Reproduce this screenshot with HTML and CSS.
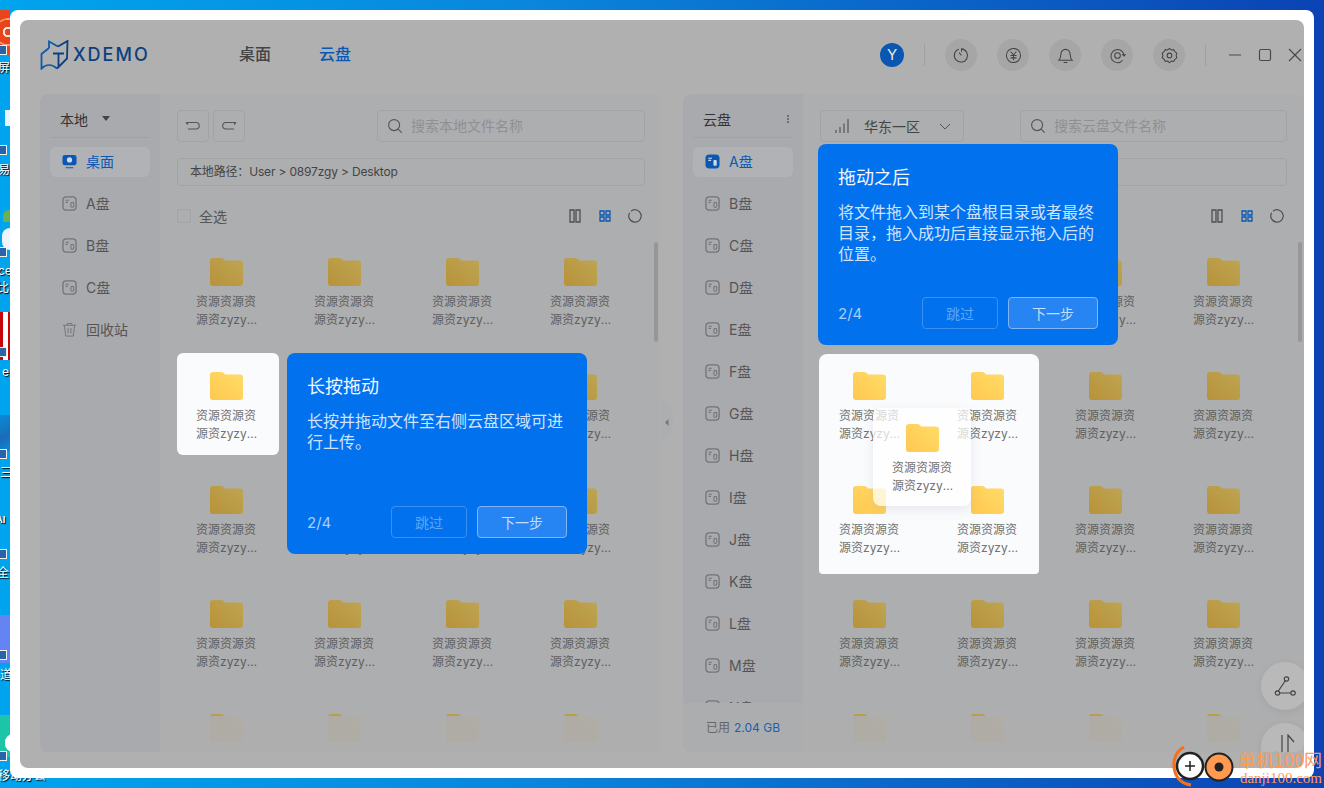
FILE: index.html
```html
<!DOCTYPE html>
<html lang="en">
<head>
  <meta charset="UTF-8" />
  <title>XDEMO</title>
  <link rel="stylesheet" href="styles.css">
</head>
<body>

  <!-- Shared icons -->
  <svg class="defs" width="0" height="0">
    <defs>
      <linearGradient id="dimFill" x1="0" y1="1" x2="1" y2="0">
        <stop offset="0" stop-color="#b8923a"/>
        <stop offset="1" stop-color="#bea553"/>
      </linearGradient>
      <linearGradient id="litFill" x1="0" y1="1" x2="1" y2="0">
        <stop offset="0" stop-color="#ffc850"/>
        <stop offset="1" stop-color="#ffdc68"/>
      </linearGradient>
      <symbol id="folder" viewBox="0 0 33 28">
        <path d="M3 0h8c2 0 3 1 4 2.500h15a3 3 0 0 1 3 3V25a3 3 0 0 1-3 3H3a3 3 0 0 1-3-3V3a3 3 0 0 1 3-3z"/>
      </symbol>
      <symbol id="disk" viewBox="0 0 16 16">
        <rect x="1" y="1" width="14" height="14" rx="3.500" fill="none" stroke="currentColor" stroke-width="1.400"/>
        <path d="M3.800 4.500h3.500M3.800 6.800h2.500" fill="none" stroke="currentColor" stroke-width="1.100"/>
        <rect x="9.500" y="7" width="3" height="5" rx="1" fill="none" stroke="currentColor" stroke-width="1.100"/>
      </symbol>
      <symbol id="search" viewBox="0 0 18 18">
        <circle cx="8" cy="8" r="6.200" fill="none" stroke="currentColor" stroke-width="1.300"/>
        <path d="M12.500 12.500l4 4" fill="none" stroke="currentColor" stroke-width="1.300"/>
      </symbol>
      <symbol id="pillars" viewBox="0 0 14 14">
        <path d="M2 1h4v12H2zM8 1h4v12H8z" fill="none" stroke="currentColor" stroke-width="1.300"/>
      </symbol>
      <symbol id="cells" viewBox="0 0 14 14">
        <path d="M2 2h4v4H2zM8 2h4v4H8zM2 8h4v4H2zM8 8h4v4H8z" fill="none" stroke="currentColor" stroke-width="1.300"/>
      </symbol>
      <symbol id="ring" viewBox="0 0 14 14">
        <path d="M3 2.200A6.200 6.200 0 1 1 1.700 3.700" fill="none" stroke="currentColor" stroke-width="1.200"/>
      </symbol>
    </defs>
  </svg>

  <!-- Desktop behind the window -->
  <div class="desk-item tile-red"></div>
  <div class="desk-item tile-sky"></div>
  <div class="desk-item tile-leaf"></div>
  <div class="desk-item tile-ball"></div>
  <div class="desk-item tile-crimson"></div>
  <div class="desk-item tile-wave"></div>
  <div class="desk-item tile-violet"></div>
  <div class="desk-item tile-teal"></div>
  <div class="desk-badge badge-1"></div>
  <div class="desk-badge badge-2"></div>
  <div class="desk-badge badge-3"></div>
  <div class="desk-badge badge-4"></div>
  <div class="desk-badge badge-5"></div>
  <div class="desk-badge badge-6"></div>
  <div class="desk-badge badge-7"></div>
  <div class="desk-badge badge-8"></div>
  <span class="desk-label label-1">屏幕</span>
  <span class="desk-label label-2">易</span>
  <span class="desk-label label-3">ce</span>
  <span class="desk-label label-4">比</span>
  <span class="desk-label label-5">e</span>
  <span class="desk-label label-6">三</span>
  <span class="desk-label label-7">AI</span>
  <span class="desk-label label-8">全</span>
  <span class="desk-label label-9">道</span>
  <span class="desk-label label-10">移动办公</span>

  <div class="window">
    <div class="app">

      <header class="topbar">
        <div class="logo">
          <svg class="logo-mark" viewBox="0 0 30 30">
            <path class="logo-left" d="M9 8V1.500L18 6.500M9 8L1.500 14v14.500C6 24 12 24 17 28.500"/>
            <path d="M18 6.500L27.500 1l-.5 17.500-10 10M13 13.500h11M18.500 13.500V27"/>
          </svg>
          <span class="logo-text">XDEMO</span>
        </div>
        <nav class="tabs">
          <span class="tab">桌面</span>
          <span class="tab active">云盘</span>
        </nav>
        <div class="tools">
          <span class="avatar">Y</span>
          <i class="vline"></i>
          <button class="round"><svg viewBox="0 0 18 18"><path d="M6 2.400A7 7 0 1 0 9 2V5M9 9L6.500 6"/></svg></button>
          <button class="round"><svg viewBox="0 0 18 18"><circle cx="9" cy="9" r="7.500"/><path d="M6 4.800L9 8.500l3-3.700M5.800 9h6.400M5.800 11.500h6.400M9 8.500v5.500"/></svg></button>
          <button class="round"><svg viewBox="0 0 18 18"><path d="M2 14h14c-1.500-1.500-2-3-2-5.500 0-3.500-2-6-5-6s-5 2.500-5 6C4 11 3.500 12.500 2 14zM7 16.500h4"/></svg></button>
          <button class="round"><svg viewBox="0 0 18 18"><circle cx="9" cy="9" r="3"/><path d="M14.500 14A7 7 0 1 1 16 9M14 7.500l2 2 1.500-2"/></svg></button>
          <button class="round"><svg viewBox="0 0 18 18"><circle cx="9" cy="9" r="2.500"/><path d="M9 1.500l2 1.600 2.500-.3 1.200 2.200 2 1.500-.7 2.500.7 2.500-2 1.500-1.200 2.200-2.500-.3-2 1.600-2-1.600-2.500.3-1.200-2.200-2-1.500.7-2.500-.7-2.500 2-1.500 1.200-2.200 2.500.3z"/></svg></button>
          <i class="vline"></i>
          <div class="winctl">
            <svg viewBox="0 0 14 14"><path d="M1 7h12"/></svg>
            <svg viewBox="0 0 14 14"><rect x="1.500" y="1.500" width="11" height="11" rx="1.500"/></svg>
            <svg viewBox="0 0 14 14"><path d="M1 1l12 12M13 1L1 13"/></svg>
          </div>
        </div>
      </header>

      <div class="panels">

        <!-- Local files -->
        <section class="panel panel-local">
          <aside class="side">
            <div class="side-head"><span>本地</span><i class="caret"></i></div>
            <ul class="side-list">
              <li class="side-item active">
                <svg class="side-icon" viewBox="0 0 16 16"><path d="M3 1h10a2.500 2.500 0 0 1 2.500 2.500v6A2.500 2.500 0 0 1 13 12H3a2.500 2.500 0 0 1-2.500-2.500v-6A2.500 2.500 0 0 1 3 1zM4 14h8v1.200H4z" fill="currentColor"/><circle cx="8" cy="6.300" r="2.800" fill="#d5d8de"/></svg>
                桌面
              </li>
              <li class="side-item"><svg class="side-icon"><use href="#disk"/></svg>A盘</li>
              <li class="side-item"><svg class="side-icon"><use href="#disk"/></svg>B盘</li>
              <li class="side-item"><svg class="side-icon"><use href="#disk"/></svg>C盘</li>
              <li class="side-item">
                <svg class="side-icon" viewBox="0 0 16 16"><path d="M1 3.500h14M5.500 3.500V1.500h5v2M2.500 3.500L4 15h8l1.500-11.500M6.500 6.500v5.500M9.500 6.500v5.500" fill="none" stroke="currentColor" stroke-width="1"/></svg>
                回收站
              </li>
            </ul>
          </aside>
          <div class="main">
            <div class="toolbar">
              <button class="square"><svg viewBox="0 0 16 10"><path d="M1 1.500h10a3.200 3.200 0 0 1 0 6.500H3M1 1.500L3 3.500"/></svg></button>
              <button class="square"><svg viewBox="0 0 16 10"><path d="M15 1.500H5a3.200 3.200 0 0 0 0 6.500h8M15 1.500L13 3.500"/></svg></button>
              <div class="searchbox"><svg class="search-icon"><use href="#search"/></svg><span>搜索本地文件名称</span></div>
            </div>
            <div class="pathbar">本地路径：User &gt; 0897zgy &gt; Desktop</div>
            <div class="selectrow">
              <label class="checkall"><i class="check"></i>全选</label>
              <div class="views">
                <svg><use href="#pillars"/></svg>
                <svg class="on"><use href="#cells"/></svg>
                <svg><use href="#ring"/></svg>
              </div>
            </div>
            <div class="grid">
              <div class="tile"><svg class="folder"><use href="#folder"/></svg><p>资源资源资源资zyzyzyzyzy</p></div>
              <div class="tile"><svg class="folder"><use href="#folder"/></svg><p>资源资源资源资zyzyzyzyzy</p></div>
              <div class="tile"><svg class="folder"><use href="#folder"/></svg><p>资源资源资源资zyzyzyzyzy</p></div>
              <div class="tile"><svg class="folder"><use href="#folder"/></svg><p>资源资源资源资zyzyzyzyzy</p></div>
              <div class="tile lit card"><svg class="folder"><use href="#folder"/></svg><p>资源资源资源资zyzyzyzyzy</p></div>
              <div class="tile"><svg class="folder"><use href="#folder"/></svg><p>资源资源资源资zyzyzyzyzy</p></div>
              <div class="tile"><svg class="folder"><use href="#folder"/></svg><p>资源资源资源资zyzyzyzyzy</p></div>
              <div class="tile"><svg class="folder"><use href="#folder"/></svg><p>资源资源资源资zyzyzyzyzy</p></div>
              <div class="tile"><svg class="folder"><use href="#folder"/></svg><p>资源资源资源资zyzyzyzyzy</p></div>
              <div class="tile"><svg class="folder"><use href="#folder"/></svg><p>资源资源资源资zyzyzyzyzy</p></div>
              <div class="tile"><svg class="folder"><use href="#folder"/></svg><p>资源资源资源资zyzyzyzyzy</p></div>
              <div class="tile"><svg class="folder"><use href="#folder"/></svg><p>资源资源资源资zyzyzyzyzy</p></div>
              <div class="tile"><svg class="folder"><use href="#folder"/></svg><p>资源资源资源资zyzyzyzyzy</p></div>
              <div class="tile"><svg class="folder"><use href="#folder"/></svg><p>资源资源资源资zyzyzyzyzy</p></div>
              <div class="tile"><svg class="folder"><use href="#folder"/></svg><p>资源资源资源资zyzyzyzyzy</p></div>
              <div class="tile"><svg class="folder"><use href="#folder"/></svg><p>资源资源资源资zyzyzyzyzy</p></div>
              <div class="tile"><svg class="folder"><use href="#folder"/></svg></div>
              <div class="tile"><svg class="folder"><use href="#folder"/></svg></div>
              <div class="tile"><svg class="folder"><use href="#folder"/></svg></div>
              <div class="tile"><svg class="folder"><use href="#folder"/></svg></div>
            </div>
            <i class="scroll"></i>
            <div class="fade"></div>
          </div>
          <svg class="handle" viewBox="0 0 12 60"><path d="M0 0c0 12 12 12 12 24v12c0 12-12 12-12 24z"/><path class="arrow" d="M7.500 29v7l-3.500-3.500z"/></svg>
        </section>

        <!-- Cloud files -->
        <section class="panel panel-cloud">
          <aside class="side">
            <div class="side-head"><span>云盘</span><i class="dots"></i></div>
            <ul class="side-list">
              <li class="side-item active">
                <svg class="side-icon" viewBox="0 0 16 16"><rect x=".5" y=".5" width="15" height="15" rx="4" fill="currentColor"/><path d="M3.500 4.500h4M3.500 6.800h3" stroke="#d5d8de" stroke-width="1.200"/><rect x="9" y="6.500" width="3.500" height="6" rx="1" fill="#d5d8de"/></svg>
                A盘
              </li>
              <li class="side-item"><svg class="side-icon"><use href="#disk"/></svg>B盘</li>
              <li class="side-item"><svg class="side-icon"><use href="#disk"/></svg>C盘</li>
              <li class="side-item"><svg class="side-icon"><use href="#disk"/></svg>D盘</li>
              <li class="side-item"><svg class="side-icon"><use href="#disk"/></svg>E盘</li>
              <li class="side-item"><svg class="side-icon"><use href="#disk"/></svg>F盘</li>
              <li class="side-item"><svg class="side-icon"><use href="#disk"/></svg>G盘</li>
              <li class="side-item"><svg class="side-icon"><use href="#disk"/></svg>H盘</li>
              <li class="side-item"><svg class="side-icon"><use href="#disk"/></svg>I盘</li>
              <li class="side-item"><svg class="side-icon"><use href="#disk"/></svg>J盘</li>
              <li class="side-item"><svg class="side-icon"><use href="#disk"/></svg>K盘</li>
              <li class="side-item"><svg class="side-icon"><use href="#disk"/></svg>L盘</li>
              <li class="side-item"><svg class="side-icon"><use href="#disk"/></svg>M盘</li>
              <li class="side-item"><svg class="side-icon"><use href="#disk"/></svg>N盘</li>
            </ul>
            <div class="usage">已用<b>2.04 GB</b></div>
          </aside>
          <div class="main">
            <div class="toolbar">
              <div class="region">
                <svg class="bars" viewBox="0 0 14 14"><path d="M1 14v-3M5 14V8M9 14V4.500M13 14V0"/></svg>
                <span>华东一区</span>
                <svg class="chev" viewBox="0 0 12 7"><path d="M1 1l5 5 5-5"/></svg>
              </div>
              <div class="searchbox"><svg class="search-icon"><use href="#search"/></svg><span>搜索云盘文件名称</span></div>
            </div>
            <div class="pathbar"></div>
            <div class="selectrow">
              <div class="views">
                <svg><use href="#pillars"/></svg>
                <svg class="on"><use href="#cells"/></svg>
                <svg><use href="#ring"/></svg>
              </div>
            </div>
            <div class="grid">
              <div class="spot"></div>
              <div class="tile"><svg class="folder"><use href="#folder"/></svg><p>资源资源资源资zyzyzyzyzy</p></div>
              <div class="tile"><svg class="folder"><use href="#folder"/></svg><p>资源资源资源资zyzyzyzyzy</p></div>
              <div class="tile"><svg class="folder"><use href="#folder"/></svg><p>资源资源资源资zyzyzyzyzy</p></div>
              <div class="tile"><svg class="folder"><use href="#folder"/></svg><p>资源资源资源资zyzyzyzyzy</p></div>
              <div class="tile lit"><svg class="folder"><use href="#folder"/></svg><p>资源资源资源资zyzyzyzyzy</p></div>
              <div class="tile lit"><svg class="folder"><use href="#folder"/></svg><p>资源资源资源资zyzyzyzyzy</p></div>
              <div class="tile"><svg class="folder"><use href="#folder"/></svg><p>资源资源资源资zyzyzyzyzy</p></div>
              <div class="tile"><svg class="folder"><use href="#folder"/></svg><p>资源资源资源资zyzyzyzyzy</p></div>
              <div class="tile lit"><svg class="folder"><use href="#folder"/></svg><p>资源资源资源资zyzyzyzyzy</p></div>
              <div class="tile lit"><svg class="folder"><use href="#folder"/></svg><p>资源资源资源资zyzyzyzyzy</p></div>
              <div class="tile"><svg class="folder"><use href="#folder"/></svg><p>资源资源资源资zyzyzyzyzy</p></div>
              <div class="tile"><svg class="folder"><use href="#folder"/></svg><p>资源资源资源资zyzyzyzyzy</p></div>
              <div class="tile"><svg class="folder"><use href="#folder"/></svg><p>资源资源资源资zyzyzyzyzy</p></div>
              <div class="tile"><svg class="folder"><use href="#folder"/></svg><p>资源资源资源资zyzyzyzyzy</p></div>
              <div class="tile"><svg class="folder"><use href="#folder"/></svg><p>资源资源资源资zyzyzyzyzy</p></div>
              <div class="tile"><svg class="folder"><use href="#folder"/></svg><p>资源资源资源资zyzyzyzyzy</p></div>
              <div class="tile"><svg class="folder"><use href="#folder"/></svg></div>
              <div class="tile"><svg class="folder"><use href="#folder"/></svg></div>
              <div class="tile"><svg class="folder"><use href="#folder"/></svg></div>
              <div class="tile"><svg class="folder"><use href="#folder"/></svg></div>
              <div class="tile lit drag"><svg class="folder"><use href="#folder"/></svg><p>资源资源资源资zyzyzyzyzy</p></div>
            </div>
            <i class="scroll"></i>
            <div class="fade"></div>
            <button class="float float-path"><svg viewBox="0 0 22 20"><path d="M11.500 4.500L4 15.500M6 17h11"/><circle cx="12.500" cy="3" r="2.200"/><circle cx="3.500" cy="17" r="2.200"/><circle cx="19" cy="17" r="2.200"/></svg></button>
            <button class="float float-swap"><svg viewBox="0 0 22 26"><path d="M8 1v24L2 18M14 25V1l6 7"/></svg></button>
          </div>
        </section>
      </div>

      <!-- Guide popups -->
      <div class="guide guide-press">
        <h3>长按拖动</h3>
        <p>长按并拖动文件至右侧云盘区域可进行上传。</p>
        <div class="guide-foot">
          <span class="step">2/4</span>
          <button class="skip">跳过</button>
          <button class="next">下一步</button>
        </div>
      </div>
      <div class="guide guide-drop">
        <h3>拖动之后</h3>
        <p>将文件拖入到某个盘根目录或者最终目录，拖入成功后直接显示拖入后的位置。</p>
        <div class="guide-foot">
          <span class="step">2/4</span>
          <button class="skip">跳过</button>
          <button class="next">下一步</button>
        </div>
      </div>
    </div>
  </div>

  <!-- Watermark over the screenshot -->
  <div class="mark">
    <svg class="mark-logo" viewBox="0 0 66 44">
      <path d="M12 3C3 8 0 18 3 28c2 7 8 12 16 13" fill="none" stroke="#f57016" stroke-width="3"/>
      <circle cx="18" cy="22" r="13" fill="#fff" stroke="#222" stroke-width="2.500"/>
      <path d="M13 22h10M18 17v10" stroke="#222" stroke-width="1.500"/>
      <circle cx="47" cy="23" r="13.500" fill="#ff9a50" stroke="#222" stroke-width="2"/>
      <circle cx="47" cy="23" r="4.500" fill="#222"/>
    </svg>
    <div class="mark-text">
      <span class="mark-cn">单机100网</span>
      <span class="mark-en">danji100.com</span>
    </div>
  </div>

</body>
</html>
```

FILE: styles.css
```css
* {
  box-sizing: border-box;
}

body {
  position: relative;
  width: 1324px;
  height: 788px;
  margin: 0;
  padding: 10px;
  overflow: hidden;
  font-family: Inter, "Noto Sans CJK SC", sans-serif;
  background: linear-gradient(90deg, #00a4ee 0%, #0a86dc 40%, #0b43b4 100%);
}

.defs {
  position: absolute;
}

button {
  font-family: inherit;
  padding: 0;
  cursor: pointer;
}

ul {
  list-style: none;
  margin: 0;
  padding: 0;
}

/* Desktop icons, only their left edge shows */
.desk-item {
  position: absolute;
  left: 0;
  width: 10px;
}

.tile-red {
  top: 10px;
  height: 45px;
  background: radial-gradient(circle at 8px 22px, #d94a22 0 3px, #fbe3d8 3.500px 5px, #e8451a 5.500px 12px, #f2a080 12.500px 13.500px, #e8451a 14px);
}

.tile-sky { top: 110px; left: 5px; width: 5px; height: 16px; background: #e8f4ff; }
.tile-leaf { top: 210px; left: 3px; width: 7px; height: 12px; border-radius: 6px 0 0 0; background: #6ab04c; }
.tile-ball { top: 228px; left: 2px; width: 8px; height: 22px; border-radius: 11px 0 0 11px; background: #eef4fb; }
.tile-crimson { top: 312px; height: 48px; background: linear-gradient(90deg, #c80505 3px, #fff 3px, #fff 8px, #c80505 8px); }
.tile-wave { top: 415px; height: 36px; background: linear-gradient(150deg, #0a8ad8, #1a6cb8 60%, #0a8ad8); }
.tile-violet { top: 615px; height: 48px; background: #6384f2; }
.tile-teal { top: 715px; height: 42px; background: radial-gradient(circle at 14px 28px, #fff 0 9px, #1cc5a8 9.500px); }

.desk-badge {
  position: absolute;
  left: 0;
  width: 7px;
  height: 10px;
  background: #2b63a8;
  border: 1px solid #f1f1f1;
  border-left: 0;
}

.badge-1 { top: 45px; }
.badge-2 { top: 145px; }
.badge-3 { top: 247px; }
.badge-4 { top: 347px; }
.badge-5 { top: 449px; }
.badge-6 { top: 549px; }
.badge-7 { top: 650px; }
.badge-8 { top: 751px; }

.desk-label {
  position: absolute;
  left: 0;
  color: #fff;
  font-size: 12px;
  line-height: 14px;
  white-space: nowrap;
  text-shadow: 1px 1px 1px #000;
}

.label-1 { top: 61px; left: -2px; }
.label-2 { top: 163px; left: -2px; }
.label-3 { top: 264px; left: -2px; }
.label-4 { top: 281px; left: -3px; }
.label-5 { top: 365px; left: 2px; }
.label-6 { top: 466px; }
.label-7 { top: 513px; left: -4px; font-size: 9px; font-weight: 700; }
.label-8 { top: 566px; left: -3px; }
.label-9 { top: 668px; }
.label-10 { top: 769px; left: -2px; }

/* Window */
.window {
  position: relative;
  height: 768px;
  padding: 10px;
  background: #fff;
  border-radius: 8px;
}

.app {
  position: relative;
  display: flex;
  flex-direction: column;
  height: 748px;
  overflow: hidden;
  background: #b0b0b0;
  border-radius: 8px;
}

.topbar {
  display: flex;
  align-items: center;
  flex: none;
  height: 74px;
  padding: 0 2px 4px 20px;
}

.logo {
  display: flex;
  align-items: center;
  width: 199px;
}

.logo-mark {
  width: 30px;
  height: 30px;
  fill: none;
  stroke: #0d3f80;
  stroke-width: 1.800;
}

.logo-left {
  stroke: #0f5aa8;
}

.logo-text {
  margin-left: 3px;
  color: #0d3f80;
  font-size: 18px;
  font-weight: 500;
  letter-spacing: 2px;
  line-height: 28px;
}

.tabs {
  display: flex;
  gap: 48px;
  margin-bottom: 5px;
}

.tab {
  color: #444;
  font-size: 16px;
  font-weight: 500;
}

.tab.active {
  color: #0a58b4;
}

.tools {
  display: flex;
  align-items: center;
  gap: 20px;
  margin-left: auto;
}

.avatar {
  width: 24px;
  height: 24px;
  border-radius: 50%;
  background: #0a56b0;
  color: #e6e6e6;
  font-size: 15px;
  line-height: 24px;
  text-align: center;
}

.vline {
  width: 1px;
  height: 22px;
  background: #9f9f9f;
}

.round {
  display: flex;
  align-items: center;
  justify-content: center;
  width: 32px;
  height: 32px;
  border: 0;
  border-radius: 50%;
  background: #a6a6a6;
}

.round svg {
  width: 17px;
  height: 17px;
  fill: none;
  stroke: #444;
  stroke-width: 1.100;
}

.winctl {
  display: flex;
  gap: 16px;
  margin-left: 2px;
}

.winctl svg {
  width: 14px;
  height: 14px;
  fill: none;
  stroke: #4a4a4a;
  stroke-width: 1.200;
}

/* Panels */
.panels {
  display: flex;
  flex: 1;
  gap: 23px;
  min-height: 0;
  padding: 0 0 16px 20px;
}

.panel {
  position: relative;
  display: flex;
  height: 100%;
  border-radius: 8px;
  background: #adaeb0;
}

.panel-local { width: 620px; }
.panel-cloud { width: 621px; overflow: hidden; }

.side {
  position: relative;
  flex: none;
  width: 120px;
  padding: 0 10px;
  overflow: hidden;
  background: #a9aaae;
  border-radius: 8px 0 0 8px;
}

.side-head {
  display: flex;
  align-items: center;
  height: 44px;
  padding: 6px 0 0 10px;
  border-bottom: 1px solid #a0a1a5;
  color: #333;
  font-size: 14px;
}

.caret {
  width: 0;
  height: 0;
  margin-left: 14px;
  border: 4px solid transparent;
  border-top: 5px solid #444;
  border-bottom: 0;
}

.dots {
  width: 2px;
  height: 2px;
  margin-left: auto;
  margin-right: 4px;
  background: #6f6f6f;
  box-shadow: 0 -3px 0 #6f6f6f, 0 3px 0 #6f6f6f;
}

.side-list {
  display: flex;
  flex-direction: column;
  gap: 12px;
  margin-top: 9px;
}

.side-item {
  display: flex;
  flex: none;
  align-items: center;
  height: 30px;
  padding: 0 0 2px 12px;
  border-radius: 6px;
  color: #555;
  font-size: 14px;
}

.side-item.active {
  background: #b1b2b6;
  color: #0a58b4;
}

.side-icon {
  flex: none;
  width: 15px;
  height: 15px;
  margin-right: 9px;
  color: #747476;
}

.side-item.active .side-icon {
  color: #0a58b4;
}

.usage {
  position: absolute;
  left: 0;
  right: 0;
  bottom: 0;
  height: 49px;
  padding: 15px 0 0 23px;
  background: #acadaf;
  color: #666;
  font-size: 12px;
  line-height: 20px;
}

.usage b {
  margin-left: 4px;
  color: #1a5fb4;
  font-weight: 400;
}

.main {
  position: relative;
  flex: 1;
  min-width: 0;
  padding: 16px 15px 0 17px;
  overflow: hidden;
  border-radius: 0 8px 8px 0;
}

.panel-cloud .main {
  padding-right: 17px;
}

.toolbar {
  display: flex;
  gap: 4px;
  height: 32px;
}

.square {
  display: flex;
  align-items: center;
  justify-content: center;
  width: 32px;
  height: 32px;
  border: 1px solid #a2a3a5;
  border-radius: 4px;
  background: none;
}

.square svg {
  width: 16px;
  height: 10px;
  fill: none;
  stroke: #555;
  stroke-width: 1.100;
}

.searchbox {
  display: flex;
  align-items: center;
  width: 268px;
  margin-left: auto;
  padding: 0 0 2px 9px;
  border: 1px solid #a2a3a5;
  border-radius: 4px;
  color: #8f9092;
  font-size: 14px;
}

.panel-cloud .searchbox {
  width: 267px;
}

.search-icon {
  width: 16px;
  height: 16px;
  margin: 2px 8px 0 0;
  color: #555;
}

.region {
  display: flex;
  align-items: center;
  width: 144px;
  padding-left: 14px;
  border: 1px solid #a2a3a5;
  border-radius: 4px;
  color: #444;
  font-size: 14px;
}

.bars {
  width: 14px;
  height: 14px;
  margin-right: 15px;
  fill: none;
  stroke: #666;
  stroke-width: 1.500;
}

.chev {
  width: 12px;
  height: 7px;
  margin-left: 19px;
  fill: none;
  stroke: #555;
  stroke-width: 1;
}

.pathbar {
  height: 28px;
  margin-top: 16px;
  padding-left: 12px;
  border: 1px solid #a2a3a5;
  border-radius: 4px;
  color: #444;
  font-size: 12px;
  letter-spacing: -0.170px;
  line-height: 26px;
}

.selectrow {
  display: flex;
  align-items: center;
  height: 30px;
  margin-top: 15px;
}

.checkall {
  display: flex;
  align-items: center;
  color: #555;
  font-size: 14px;
}

.check {
  width: 14px;
  height: 14px;
  margin-right: 8px;
  border: 1px solid #a2a3a5;
  border-radius: 2px;
}

.views {
  display: flex;
  gap: 16px;
  margin-left: auto;
  margin-right: 3px;
}

.views svg {
  width: 14px;
  height: 14px;
  color: #4f4f4f;
}

.views svg.on {
  color: #0a58b4;
}

.grid {
  position: relative;
  display: grid;
  grid-template-columns: repeat(4, 102px);
  grid-auto-rows: 102px;
  gap: 12px 16px;
  margin-top: 8px;
}

.tile {
  position: relative;
  padding: 19px 0 0 19px;
  border-radius: 6px;
}

.folder {
  display: block;
  width: 33px;
  height: 28px;
  margin-left: 14px;
  fill: url(#dimFill);
}

.tile p {
  display: -webkit-box;
  width: 62px;
  height: 36px;
  margin: 7px 0 0;
  overflow: hidden;
  color: #5f5f5f;
  font-size: 12px;
  line-height: 18px;
  word-break: break-all;
  -webkit-box-orient: vertical;
  -webkit-line-clamp: 2;
}

.lit .folder {
  fill: url(#litFill);
}

.lit p {
  color: #727272;
}

.card {
  background: #fafbfd;
}

.spot {
  position: absolute;
  grid-column: 1 / 3;
  grid-row: 2 / 4;
  top: 1px;
  left: -1px;
  width: 220px;
  height: 220px;
  border-radius: 8px 8px 4px 4px;
  background: #fafbfd;
}

.drag {
  position: absolute;
  top: 169px;
  left: 53px;
  width: 98px;
  height: 98px;
  padding-top: 16px;
  border-radius: 8px;
  background: rgba(255, 255, 255, 0.72);
  box-shadow: 0 4px 12px rgba(90, 100, 120, 0.12);
}

.scroll {
  position: absolute;
  top: 148px;
  right: 2px;
  width: 4px;
  height: 100px;
  border-radius: 2px;
  background: #979799;
}

.fade {
  position: absolute;
  left: 0;
  right: 0;
  bottom: 0;
  height: 36px;
  background: rgba(174, 174, 174, 0.92);
}

.handle {
  position: absolute;
  top: 296px;
  left: 100%;
  width: 12px;
  height: 60px;
  margin-left: 1px;
  fill: #adaeb0;
}

.handle .arrow {
  fill: #76777c;
}

.float {
  position: absolute;
  right: -5px;
  display: flex;
  align-items: center;
  justify-content: center;
  width: 48px;
  height: 48px;
  border: 0;
  border-radius: 50%;
  background: #b9b9b9;
  box-shadow: 0 2px 8px rgba(0, 0, 0, 0.06);
}

.float-path { top: 568px; }
.float-swap { top: 629px; }

.float svg {
  fill: none;
  stroke: #444;
  stroke-width: 1.200;
}

.float-path svg {
  width: 22px;
  height: 20px;
}

.float-swap svg {
  width: 22px;
  height: 26px;
}

/* Guide popups */
.guide {
  position: absolute;
  display: flex;
  flex-direction: column;
  width: 300px;
  height: 201px;
  padding: 22px 20px 16px;
  border-radius: 8px;
  background: #0271ee;
}

.guide-press { top: 333px; left: 267px; }
.guide-drop { top: 124px; left: 798px; }

.guide h3 {
  margin: 0;
  color: #f2f7ff;
  font-size: 18px;
  font-weight: 400;
  line-height: 24px;
}

.guide p {
  margin: 12px 0 0;
  color: #cfe3ff;
  font-size: 16px;
  line-height: 21px;
}

.guide-foot {
  display: flex;
  align-items: center;
  gap: 10px;
  margin-top: auto;
}

.step {
  margin-right: auto;
  color: #a8cffb;
  font-size: 15px;
}

.skip,
.next {
  height: 32px;
  border-radius: 4px;
  font-size: 14px;
}

.skip {
  width: 76px;
  border: 1px solid #3a91f3;
  background: none;
  color: #5ea6f6;
}

.next {
  width: 90px;
  border: 1px solid #7fb6f8;
  background: #2784f3;
  color: #c5defc;
}

/* Watermark */
.mark {
  position: absolute;
  right: 2px;
  bottom: 0;
  display: flex;
  align-items: flex-end;
  height: 44px;
}

.mark-logo {
  width: 66px;
  height: 44px;
}

.mark-text {
  display: flex;
  flex-direction: column;
  align-items: flex-end;
}

.mark-cn {
  color: #ff9a55;
  font-family: "Noto Sans CJK SC", sans-serif;
  font-size: 18px;
  line-height: 22px;
}

.mark-en {
  color: #ff9a55;
  font-family: "Liberation Serif", serif;
  font-size: 15px;
  line-height: 16px;
  margin-bottom: 2px;
}
```
